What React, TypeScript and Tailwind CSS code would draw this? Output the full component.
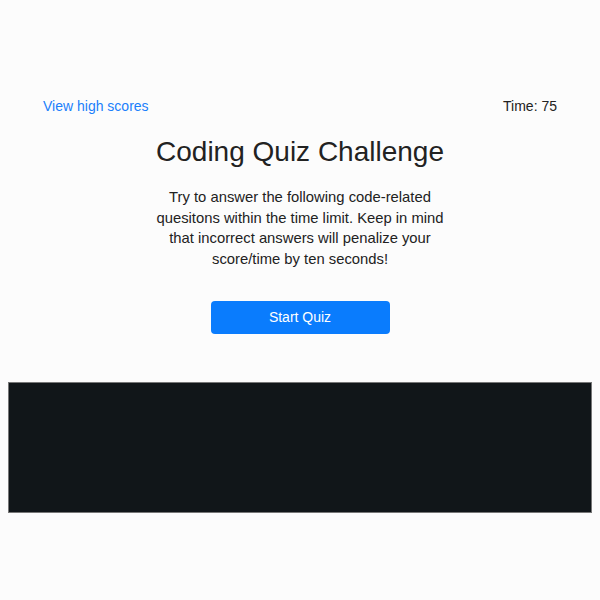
export default function App() {
  return (
    <div className="w-[600px] h-[600px] bg-[#fcfcfc] overflow-hidden" style={{ fontFamily: '"Liberation Sans", Arial, sans-serif' }}>
      <div className="pt-[96px] px-[43px] flex justify-between items-center text-[14px] leading-[21px]">
        <a className="text-[#1a7ffb] cursor-pointer">View high scores</a>
        <span className="text-[#222]">Time: 75</span>
      </div>
      <div className="flex flex-col items-center">
        <h1 className="mt-[17px] text-[28px] leading-[36px] text-[#222]">Coding Quiz Challenge</h1>
        <p className="mt-[17px] w-[292px] text-center text-[14.8px] leading-[20.7px] text-[#222]">
          Try to answer the following code-related quesitons within the time limit. Keep in mind that incorrect answers will penalize your score/time by ten seconds!
        </p>
        <button className="mt-[31px] w-[179px] h-[33px] rounded-[4px] bg-[#0a7cfd] text-white text-[14px]">Start Quiz</button>
      </div>
      <div className="mt-[48px] mx-[8px] h-[131px] bg-[#111619] border border-[#777]"></div>
    </div>
  );
}
